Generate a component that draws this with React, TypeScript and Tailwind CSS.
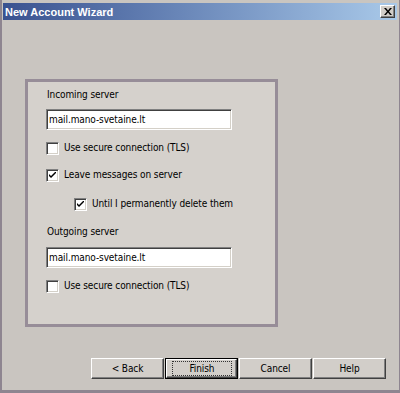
import React from "react";

const T = "text-[10px] tracking-[-0.1px] leading-[14px] text-black";

function Check({ checked }: { checked: boolean }) {
  return (
    <div className="w-[13px] h-[13px] bg-white border-t border-l border-t-[#808080] border-l-[#808080] border-b border-r border-b-white border-r-white shadow-[inset_1px_1px_0_#404040,inset_-1px_-1px_0_#d4d0c8] flex items-center justify-center shrink-0">
      {checked && (
        <svg width="7" height="7" viewBox="0 0 7 7" className="block">
          <path d="M0 2 L0 4 L2 6 L7 1 L7 -1 L2 4 Z" fill="#000" />
        </svg>
      )}
    </div>
  );
}

function Row({ checked, label, indent }: { checked: boolean; label: string; indent?: boolean }) {
  return (
    <div className={`flex items-center h-[14px] ${indent ? "pl-[46px]" : "pl-[18px]"}`}>
      <Check checked={checked} />
      <span className={`ml-[5px] ${T}`}>{label}</span>
    </div>
  );
}

function Field({ value }: { value: string }) {
  return (
    <div className="ml-[18px] w-[186px] h-[21px] bg-white border-t border-l border-t-[#808080] border-l-[#808080] border-b border-r border-b-white border-r-white shadow-[inset_1px_1px_0_#404040,inset_-1px_-1px_0_#d4d0c8] flex items-center pl-[2px]">
      <span className={T}>{value}</span>
    </div>
  );
}

function Btn({ label, def }: { label: string; def?: boolean }) {
  if (def) {
    return (
      <div className="w-[73px] h-[21px] border border-black">
        <div className="w-full h-full bg-[#d2cec9] border-t border-l border-t-white border-l-white border-b border-r border-b-[#404040] border-r-[#404040] shadow-[inset_-1px_-1px_0_#808080] pt-[1px] pb-[1px] pl-[5px] pr-[4px]">
          <div className="w-full h-full border border-dotted border-[#333] flex items-center justify-center">
            <span className={T}>{label}</span>
          </div>
        </div>
      </div>
    );
  }
  return (
    <div className="w-[73px] h-[21px] bg-[#d2cec9] border-t border-l border-t-white border-l-white border-b border-r border-b-[#404040] border-r-[#404040] shadow-[inset_-1px_-1px_0_#808080] flex items-center justify-center">
      <span className={T}>{label}</span>
    </div>
  );
}

export default function App() {
  return (
    <div className="w-[400px] h-[393px] bg-[#c9c5c0] border-l-2 border-r border-b-[3px] border-[#8e8590] pt-[3px] pl-px pr-[2px] flex flex-col font-['DejaVu_Sans_Condensed','Liberation_Sans',Arial,sans-serif] overflow-hidden">
      <div className="h-[17px] bg-gradient-to-r from-[#3a5290] to-[#a9c9e9] flex items-center justify-between pl-[2px] pr-[2px]">
        <span className="text-white font-bold text-[11px] leading-[14px] font-['Liberation_Sans',Arial,sans-serif]">New Account Wizard</span>
        <div className="w-[15px] h-[13px] bg-[#d2cec9] border-t border-l border-t-white border-l-white border-b border-r border-b-[#404040] border-r-[#404040] shadow-[inset_-1px_-1px_0_#808080] flex items-center justify-center">
          <svg width="8" height="7" viewBox="0 0 8 7">
            <path d="M0 0h2l2 2.5L6 0h2L5 3.5L8 7H6L4 4.5L2 7H0l3-3.5z" fill="#000" />
          </svg>
        </div>
      </div>
      <div className="flex flex-col pl-[22px] pt-[59px]">
        <div className="w-[253px] h-[248px] border-[3px] border-[#978d98] bg-[#d5d1cc] flex flex-col">
          <div className={`mt-[6px] pl-[19px] ${T}`}>Incoming server</div>
          <div className="mt-[7px]"><Field value="mail.mano-svetaine.lt" /></div>
          <div className="mt-[11px]"><Row checked={false} label="Use secure connection (TLS)" /></div>
          <div className="mt-[13px]"><Row checked={true} label="Leave messages on server" /></div>
          <div className="mt-[15px]"><Row checked={true} indent label="Until I permanently delete them" /></div>
          <div className={`mt-[14px] pl-[19px] ${T}`}>Outgoing server</div>
          <div className="mt-[8px]"><Field value="mail.mano-svetaine.lt" /></div>
          <div className="mt-[11px]"><Row checked={false} label="Use secure connection (TLS)" /></div>
        </div>
      </div>
      <div className="mt-[31px] flex justify-end gap-px pr-[11px]">
        <Btn label="< Back" />
        <Btn label="Finish" def />
        <Btn label="Cancel" />
        <Btn label="Help" />
      </div>
    </div>
  );
}
